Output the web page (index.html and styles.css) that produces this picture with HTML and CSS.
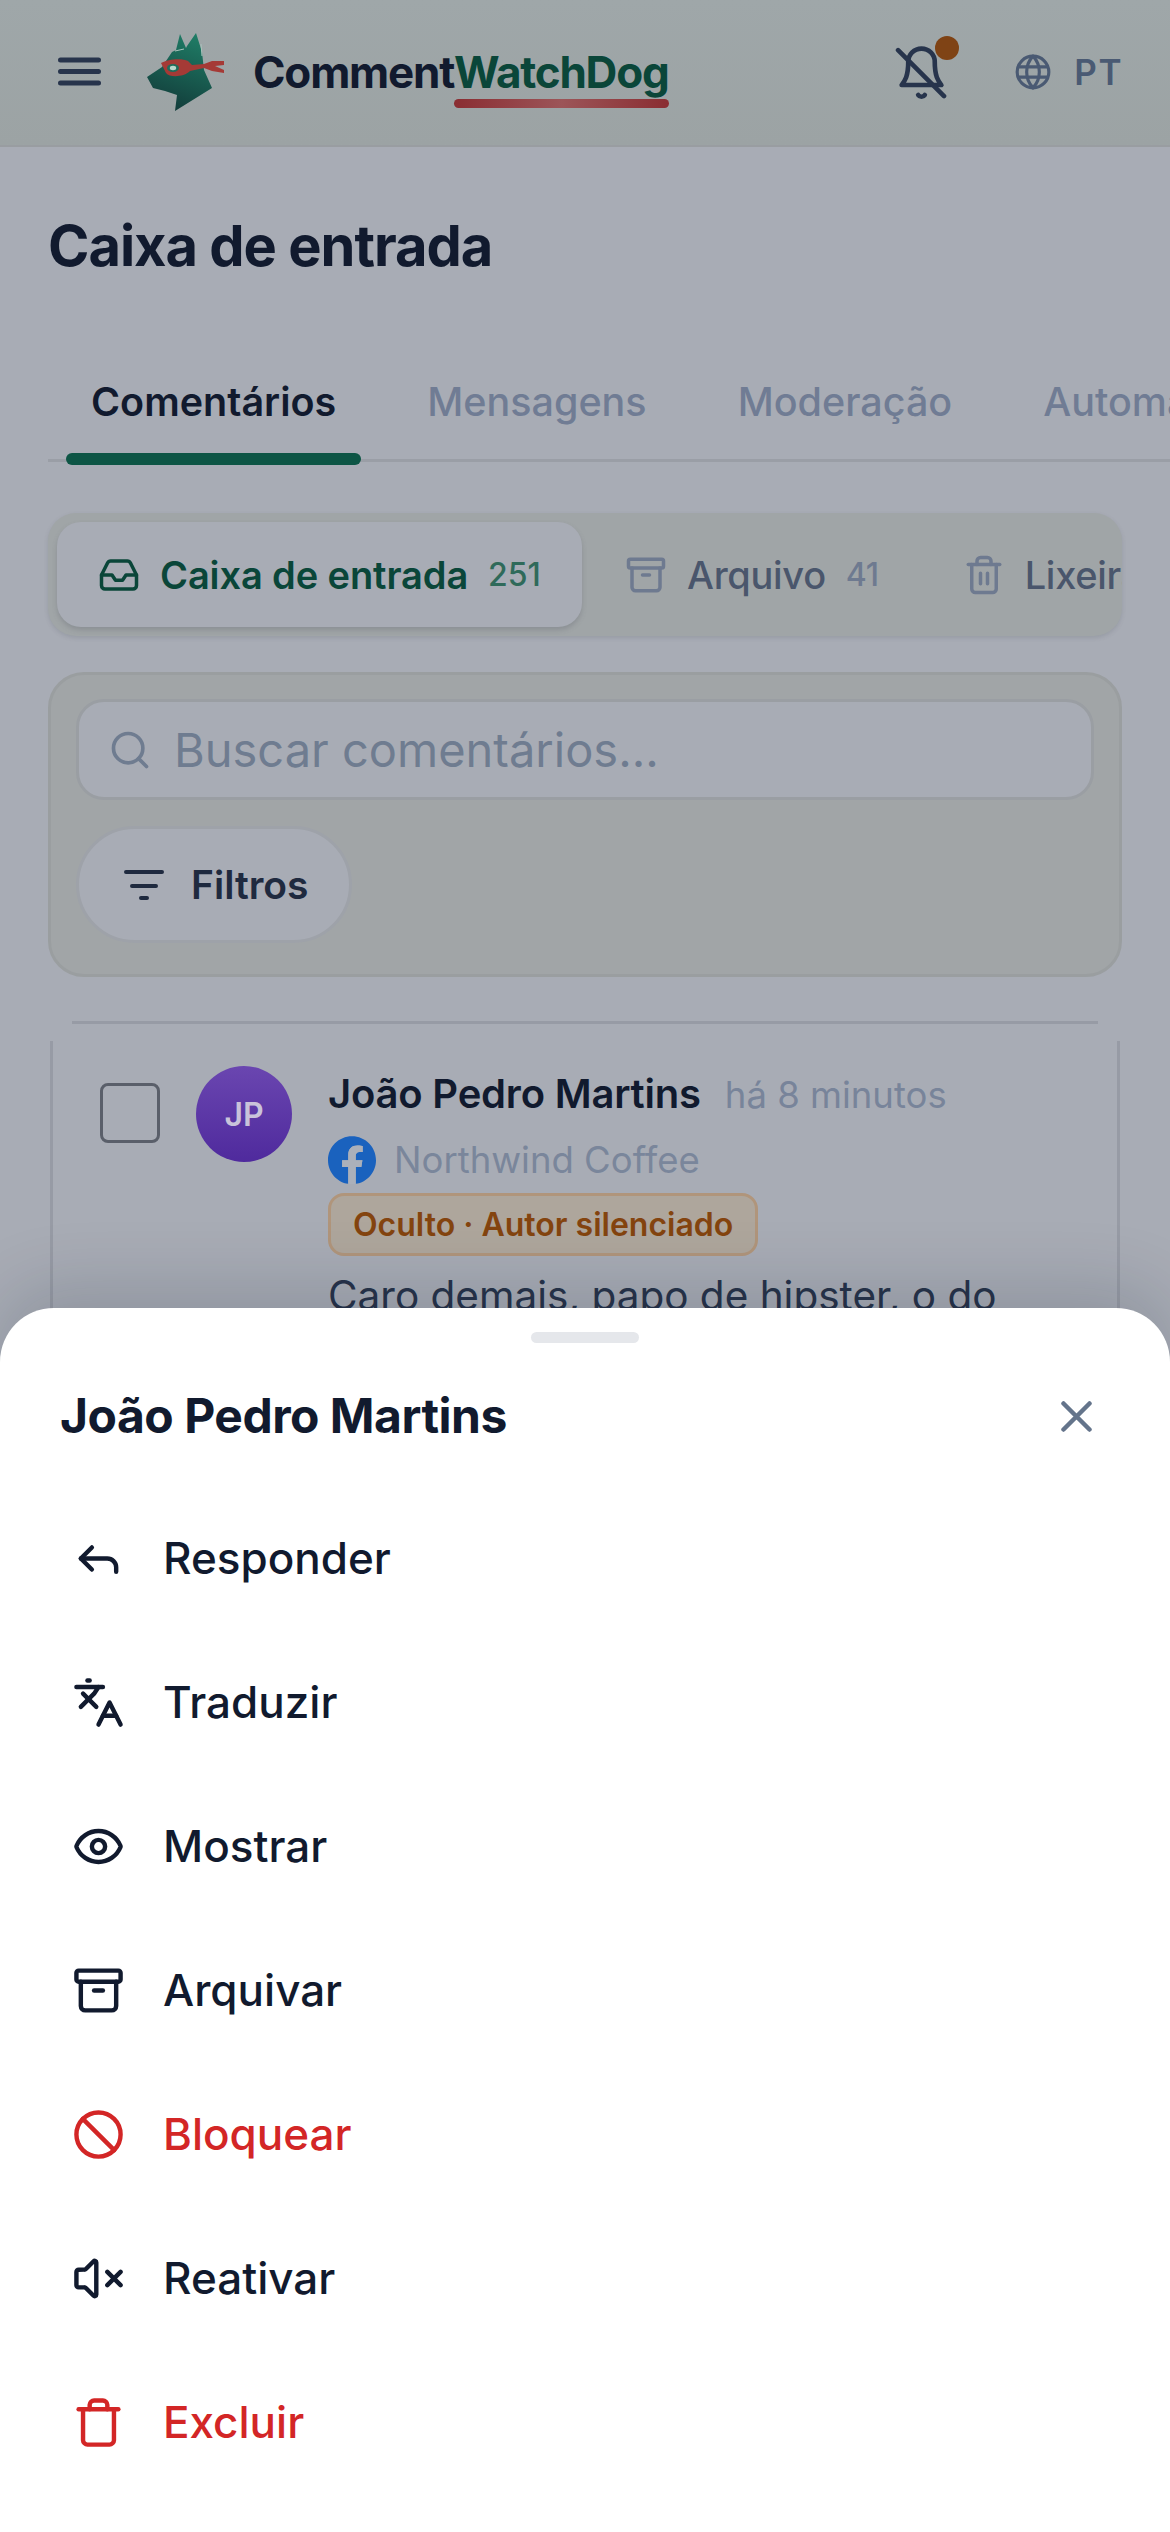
FILE: index.html
```html
<!DOCTYPE html>
<html lang="pt">
<head>
    <meta charset="UTF-8">
    <meta name="viewport" content="width=device-width, initial-scale=1.0">
    <title>Caixa de entrada</title>
    <link rel="stylesheet" href="styles.css">
</head>
<body>
<div class="screen">

    <!-- Top bar -->
    <header class="topbar">
        <svg class="menu-icon" viewBox="0 0 43 29" fill="none" stroke="currentColor" stroke-width="5" stroke-linecap="round">
            <path d="M2.500 3h38M2.500 14.500h38M2.500 26h38"/>
        </svg>
        <svg class="logo" viewBox="0 0 120 110">
            <defs>
                <linearGradient id="dog" x1="0.7" y1="0" x2="0.4" y2="1">
                    <stop offset="0" stop-color="#1f7d66"/>
                    <stop offset="1" stop-color="#123c3a"/>
                </linearGradient>
            </defs>
            <path fill="url(#dog)" d="M46 30 50 14 56 28 57 26 66 13 72 32 74 50 82 68 45 91 47 75 35 71 23 68 17 57 32 47 42 32Z"/>
            <path fill="none" stroke="#a9c4bd" stroke-width="1" d="M45 31 54 29M71 24 72 36"/>
            <path fill="#a53a36" d="M31 43C38 39 52 38 58 41L62 45 74 44 82 41 94 41 94 45 85 46 94 50 94 53 82 51 74 48 60 51C54 57 40 58 36 53Z"/>
            <ellipse cx="43" cy="48" rx="6" ry="4" fill="#1f6d5c"/>
            <ellipse cx="43" cy="48" rx="3.200" ry="2.200" fill="#b9d6cc"/>
        </svg>
        <div class="brand">Comment<span class="brand-accent">WatchDog</span></div>
        <div class="bell">
            <svg class="icon" viewBox="0 0 24 27">
                <path d="M6 8a6 6 0 0 1 12 0c0 6.500 1.500 8.500 3 10.500H3c1.500-2 3-4 3-10.500"/>
                <path d="M10.500 23a1.800 1.800 0 0 0 3 0"/>
                <path d="M1.400 2.700 22.200 23.500"/>
            </svg>
            <span class="bell-dot"></span>
        </div>
        <div class="lang">
            <svg class="icon" viewBox="0 0 24 24">
                <circle cx="12" cy="12" r="10"/>
                <path d="M12 2a14.500 14.500 0 0 0 0 20 14.500 14.500 0 0 0 0-20"/>
                <path d="M3 8.800h18M3 15.200h18"/>
            </svg>
            <span>PT</span>
        </div>
    </header>

    <main class="content">
        <h1 class="page-title">Caixa de entrada</h1>

        <nav class="tabs">
            <a class="tab active">Comentários</a>
            <a class="tab">Mensagens</a>
            <a class="tab">Moderação</a>
            <a class="tab">Automações</a>
        </nav>

        <div class="subtabs">
            <div class="subtab active">
                <svg class="icon" viewBox="0 0 24 24">
                    <polyline points="22 12 16 12 14 15 10 15 8 12 2 12"/>
                    <path d="M5.450 5.110 2 12v6a2 2 0 0 0 2 2h16a2 2 0 0 0 2-2v-6l-3.450-6.890A2 2 0 0 0 16.760 4H7.240a2 2 0 0 0-1.790 1.110z"/>
                </svg>
                <span>Caixa de entrada</span>
                <span class="count">251</span>
            </div>
            <div class="subtab">
                <svg class="icon" viewBox="0 0 24 24">
                    <rect width="20" height="5" x="2" y="3" rx="1"/>
                    <path d="M4 8v11a2 2 0 0 0 2 2h12a2 2 0 0 0 2-2V8"/>
                    <path d="M10 12h4"/>
                </svg>
                <span>Arquivo</span>
                <span class="count">41</span>
            </div>
            <div class="subtab">
                <svg class="icon" viewBox="0 0 24 24">
                    <path d="M3 6h18"/>
                    <path d="M19 6v14c0 1-1 2-2 2H7c-1 0-2-1-2-2V6"/>
                    <path d="M8 6V4c0-1 1-2 2-2h4c1 0 2 1 2 2v2"/>
                    <path d="M10 11v6M14 11v6"/>
                </svg>
                <span>Lixeira</span>
            </div>
        </div>

        <section class="search-panel">
            <div class="search-box">
                <svg class="icon" viewBox="0 0 24 24">
                    <circle cx="11" cy="11" r="8"/>
                    <path d="m21 21-4.300-4.300"/>
                </svg>
                <span>Buscar comentários...</span>
            </div>
            <button class="filter-btn">
                <svg class="filter-icon" viewBox="0 0 40 30" fill="none" stroke="currentColor" stroke-width="4" stroke-linecap="round">
                    <path d="M2 2h36M8 16h24M17 28h6"/>
                </svg>
                Filtros
            </button>
        </section>

        <article class="comment">
            <span class="checkbox"></span>
            <div class="avatar">JP</div>
            <div class="comment-body">
                <div class="comment-head">
                    <span class="author">João Pedro Martins</span>
                    <span class="time">há 8 minutos</span>
                </div>
                <div class="source">
                    <svg class="fb-icon" viewBox="0 0 24 24">
                        <path fill="#1a62be" d="M24 12.073c0-6.627-5.373-12-12-12s-12 5.373-12 12c0 5.990 4.388 10.954 10.125 11.854v-8.385H7.078v-3.470h3.047V9.430c0-3.007 1.792-4.669 4.533-4.669 1.312 0 2.686.235 2.686.235v2.953H15.830c-1.491 0-1.956.925-1.956 1.874v2.250h3.328l-.532 3.470h-2.796v8.385C19.612 23.027 24 18.062 24 12.073z"/>
                        <path fill="#abb0ba" d="M16.671 15.542l.532-3.470h-3.328v-2.250c0-.949.465-1.874 1.956-1.874h1.514V4.995s-1.374-.235-2.686-.235c-2.741 0-4.533 1.662-4.533 4.669v2.643H7.078v3.470h3.047v8.385a12.100 12.100 0 0 0 3.750 0v-8.385z"/>
                    </svg>
                    Northwind Coffee
                </div>
                <span class="badge">Oculto · Autor silenciado</span>
                <p class="comment-text">Caro demais, papo de hipster, o do</p>
            </div>
        </article>
    </main>

    <!-- Bottom sheet -->
    <aside class="sheet">
        <div class="sheet-handle"></div>
        <div class="sheet-head">
            <h2>João Pedro Martins</h2>
            <svg class="close-icon" viewBox="0 0 31 31" fill="none" stroke="currentColor" stroke-width="4.500" stroke-linecap="round">
                <path d="M2.500 2.500l26 26M28.500 2.500l-26 26"/>
            </svg>
        </div>
        <ul class="actions">
            <li class="action">
                <svg class="icon" viewBox="0 0 24 24">
                    <polyline points="9 17 4 12 9 7"/>
                    <path d="M20 18v-2a4 4 0 0 0-4-4H4"/>
                </svg>
                Responder
            </li>
            <li class="action">
                <svg class="icon" viewBox="0 0 24 24">
                    <path d="m5 8 6 6"/>
                    <path d="m4 14 6-6 2-3"/>
                    <path d="M2 5h12"/>
                    <path d="M7 2h1"/>
                    <path d="m22 22-5-10-5 10"/>
                    <path d="M14 18h6"/>
                </svg>
                Traduzir
            </li>
            <li class="action">
                <svg class="icon" viewBox="0 0 24 24">
                    <path d="M2.062 12.348a1 1 0 0 1 0-.696 10.750 10.750 0 0 1 19.876 0 1 1 0 0 1 0 .696 10.750 10.750 0 0 1-19.876 0"/>
                    <circle cx="12" cy="12" r="3"/>
                </svg>
                Mostrar
            </li>
            <li class="action">
                <svg class="icon" viewBox="0 0 24 24">
                    <rect width="20" height="5" x="2" y="3" rx="1"/>
                    <path d="M4 8v11a2 2 0 0 0 2 2h12a2 2 0 0 0 2-2V8"/>
                    <path d="M10 12h4"/>
                </svg>
                Arquivar
            </li>
            <li class="action danger">
                <svg class="icon" viewBox="0 0 24 24">
                    <circle cx="12" cy="12" r="10"/>
                    <path d="m4.900 4.900 14.200 14.200"/>
                </svg>
                Bloquear
            </li>
            <li class="action">
                <svg class="icon" viewBox="0 0 24 24">
                    <path d="M11 4.702a.705.705 0 0 0-1.203-.498L6.413 7.587A1.400 1.400 0 0 1 5.416 8H3a1 1 0 0 0-1 1v6a1 1 0 0 0 1 1h2.416a1.400 1.400 0 0 1 .997.413l3.383 3.384A.705.705 0 0 0 11 19.298z"/>
                    <path d="M22 9l-6 6M16 9l6 6"/>
                </svg>
                Reativar
            </li>
            <li class="action danger">
                <svg class="icon" viewBox="0 0 24 24">
                    <path d="M3 6h18"/>
                    <path d="M19 6v14c0 1-1 2-2 2H7c-1 0-2-1-2-2V6"/>
                    <path d="M8 6V4c0-1 1-2 2-2h4c1 0 2 1 2 2v2"/>
                </svg>
                Excluir
            </li>
        </ul>
    </aside>
</div>
</body>
</html>
```

FILE: styles.css
```css
* {
    box-sizing: border-box;
}

body {
    margin: 0;
    font-family: Inter, "Noto Sans", sans-serif;
    color: #111a2e;
    background-color: #a8acb5;
}

.screen {
    position: relative;
    height: 2532px;
    overflow: hidden;
}

.icon {
    fill: none;
    stroke: currentColor;
    stroke-width: 2;
    stroke-linecap: round;
    stroke-linejoin: round;
    flex-shrink: 0;
}

/* Top bar */
.topbar {
    height: 147px;
    display: flex;
    align-items: center;
    padding: 0 47px 0 58px;
    background: linear-gradient(#9fa7a9, #9ca3a4);
    border-bottom: 2px solid #999da1;
}

.menu-icon {
    width: 43px;
    height: 29px;
    color: #27344c;
    flex-shrink: 0;
    margin-bottom: 2px;
}

.logo {
    width: 120px;
    height: 110px;
    margin-left: 29px;
    margin-top: 5px;
    flex-shrink: 0;
}

.brand {
    margin-left: 3px;
    margin-bottom: 2px;
    font-size: 44px;
    font-weight: 700;
    letter-spacing: -1.200px;
    color: #111a2e;
}

.brand-accent {
    color: #0a4639;
    position: relative;
}

.brand-accent::after {
    content: "";
    position: absolute;
    left: 0;
    right: 0;
    bottom: -9px;
    height: 9px;
    border-radius: 5px;
    background: linear-gradient(90deg, #8a2d32, #9c5558 50%, #8a2d32);
}

.bell {
    position: relative;
    margin-left: auto;
    margin-top: 3px;
    width: 53px;
    height: 60px;
    color: #27344c;
}

.bell .icon {
    display: block;
    width: 53px;
    height: 60px;
    stroke-width: 2.100;
}

.bell-dot {
    position: absolute;
    top: -8px;
    left: 40px;
    width: 24px;
    height: 24px;
    border-radius: 50%;
    background-color: #7f4315;
}

.lang {
    display: flex;
    align-items: center;
    gap: 22px;
    margin-left: 66px;
    margin-bottom: 2px;
    font-size: 35px;
    font-weight: 600;
    letter-spacing: 1.500px;
    color: #4a5a73;
}

.lang .icon {
    width: 38px;
    height: 38px;
}

/* Main content */
.content {
    padding-left: 48px;
}

.page-title {
    margin: 0;
    padding-top: 64px;
    font-size: 56px;
    line-height: 70px;
    font-weight: 700;
    letter-spacing: -1px;
}

.tabs {
    display: flex;
    gap: 41px;
    height: 181px;
    padding: 95px 0 0 18px;
    border-bottom: 3px solid #9a9ea6;
}

.tab {
    position: relative;
    padding: 0 25px;
    font-size: 39.500px;
    line-height: 52px;
    font-weight: 500;
    color: #707c94;
    white-space: nowrap;
    flex-shrink: 0;
}

.tab.active {
    font-weight: 600;
    color: #111a2e;
}

.tab.active::after {
    content: "";
    position: absolute;
    left: 0;
    right: 0;
    top: 77px;
    height: 12px;
    border-radius: 6px;
    background-color: #0d5545;
}

.subtabs {
    display: flex;
    gap: 2px;
    width: 1074px;
    height: 123px;
    margin-top: 51px;
    padding: 9px;
    border-radius: 28px;
    background-color: #a0a5a7;
    overflow: hidden;
    box-shadow: 0 2px 4px rgba(80, 85, 95, 0.18);
}

.subtab {
    display: flex;
    align-items: center;
    gap: 20px;
    padding: 0 41px;
    font-size: 38px;
    font-weight: 500;
    letter-spacing: -0.300px;
    color: #4a566c;
    white-space: nowrap;
    flex-shrink: 0;
}

.subtab .icon {
    width: 42px;
    height: 42px;
    color: #6e7a90;
}

.subtab .count {
    font-size: 32px;
    font-weight: 500;
    color: #6e7a90;
}

.subtab.active {
    width: 525px;
    border-radius: 24px;
    background-color: #a8acb5;
    font-weight: 600;
    letter-spacing: -0.100px;
    color: #0a4639;
    box-shadow: 0 3px 5px rgba(80, 85, 95, 0.25);
}

.subtab.active .icon {
    color: #0a4639;
}

.subtab.active .count {
    color: #2f6a5a;
}

.search-panel {
    width: 1074px;
    height: 305px;
    margin-top: 36px;
    padding: 24px 25px;
    border: 3px solid #9a9ea0;
    border-radius: 36px;
    background-color: #a1a5a7;
}

.search-box {
    display: flex;
    align-items: center;
    gap: 22px;
    height: 101px;
    padding: 0 29px;
    border: 3px solid #9a9ea3;
    border-radius: 28px;
    background-color: #a8acb5;
    font-size: 47px;
    color: #6f7c90;
}

.search-box .icon {
    width: 44px;
    height: 44px;
}

.filter-btn {
    display: flex;
    align-items: center;
    gap: 27px;
    width: 276px;
    height: 117px;
    margin-top: 26px;
    padding: 0 0 0 45px;
    border: 3px solid #9ea2a9;
    border-radius: 59px;
    background-color: #a8acb5;
    font-family: inherit;
    font-size: 39px;
    font-weight: 600;
    color: #1f2a3f;
}

.filter-icon {
    width: 40px;
    height: 30px;
}

/* Comment card: top and side lines stop short of the corners */
.comment {
    display: flex;
    width: 1070px;
    height: 400px;
    margin: 44px 0 0 2px;
    padding: 45px 0 0 50px;
    background:
        linear-gradient(#979ba5, #979ba5) 22px 0 / calc(100% - 44px) 3px no-repeat,
        linear-gradient(#979ba5, #979ba5) 0 20px / 3px 100% no-repeat,
        linear-gradient(#979ba5, #979ba5) 100% 20px / 3px 100% no-repeat;
}

.checkbox {
    width: 60px;
    height: 60px;
    margin-top: 17px;
    border: 3px solid #5a5f6a;
    border-radius: 8px;
    flex-shrink: 0;
}

.avatar {
    display: flex;
    align-items: center;
    justify-content: center;
    width: 96px;
    height: 96px;
    margin-left: 36px;
    border-radius: 50%;
    background: linear-gradient(#6a46b0, #4f2a9d);
    font-size: 32px;
    font-weight: 600;
    color: #c9c3da;
    flex-shrink: 0;
}

.comment-body {
    margin-left: 36px;
}

.comment-head {
    display: flex;
    align-items: baseline;
    gap: 24px;
    height: 53px;
    padding-top: 3px;
}

.author {
    font-size: 40px;
    font-weight: 600;
    letter-spacing: -0.200px;
}

.time {
    font-size: 36.500px;
    color: #78849a;
}

.source {
    display: flex;
    align-items: center;
    gap: 18px;
    height: 48px;
    margin-top: 17px;
    font-size: 36.500px;
    color: #7a869b;
}

.fb-icon {
    width: 48px;
    height: 48px;
}

.badge {
    display: inline-block;
    height: 63px;
    margin-top: 9px;
    padding: 0 22px;
    border: 3px solid #b0957b;
    border-radius: 16px;
    background-color: #aea69c;
    font-size: 32px;
    line-height: 57px;
    font-weight: 600;
    color: #84440f;
}

.comment-text {
    margin: 14px 0 0;
    font-size: 40.500px;
    line-height: 52px;
    color: #27334a;
    white-space: nowrap;
}

/* Bottom sheet */
.sheet {
    position: absolute;
    left: 0;
    right: 0;
    bottom: 0;
    height: 1224px;
    border-radius: 54px 54px 0 0;
    background-color: #fff;
    box-shadow: 0 -20px 70px rgba(15, 23, 42, 0.16);
}

.sheet-handle {
    width: 108px;
    height: 11px;
    margin: 24px auto 0;
    border-radius: 6px;
    background-color: #e5e7eb;
}

.sheet-head {
    display: flex;
    align-items: center;
    justify-content: space-between;
    height: 143px;
    padding: 2px 78px 0 60px;
}

.sheet-head h2 {
    margin: 0;
    font-size: 48px;
    font-weight: 700;
    letter-spacing: -0.500px;
}

.close-icon {
    width: 31px;
    height: 31px;
    margin-top: 2px;
    color: #64748b;
}

.actions {
    margin: 0;
    padding: 0;
    list-style: none;
}

.action {
    display: flex;
    align-items: center;
    gap: 38px;
    height: 144px;
    padding-left: 72px;
    font-size: 44px;
    font-weight: 500;
    color: #111a2e;
}

.action .icon {
    width: 53px;
    height: 53px;
}

.action.danger {
    color: #d32626;
}
```
